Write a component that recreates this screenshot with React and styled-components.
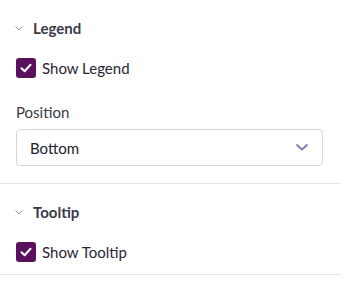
import React from 'react'
import styled, { createGlobalStyle } from 'styled-components'

const Global = createGlobalStyle`
  body {
    margin: 0;
    background: #ffffff;
    font-family: Lato, "Open Sans", sans-serif;
  }
`;

const Panel = styled.div`
  width: 341px;
  background: #fff;
`;

const Section = styled.div`
  padding: 18px 18px ${p => p.$pb}px 16px;
  border-bottom: 1px solid #e7e4f1;
  display: flex;
  flex-direction: column;
`;

const Header = styled.div`
  display: flex;
  align-items: center;
  height: 20px;
  gap: 10px;
  color: #3b3a48;
  font-size: 15px;
  font-weight: 700;
  margin-bottom: 20px;
`;

const Chevron = styled.svg`
  width: 8px;
  height: 5px;
  margin-left: -1px;
`;

const CheckRow = styled.label`
  display: flex;
  align-items: center;
  gap: 6px;
  height: 20px;
  font-size: 15px;
  color: #2a2535;
`;

const Box = styled.span`
  width: 20px;
  height: 20px;
  border-radius: 3px;
  background: #5a0f5f;
  display: flex;
  align-items: center;
  justify-content: center;
`;

const FieldLabel = styled.div`
  margin-top: 24px;
  height: 20px;
  line-height: 20px;
  font-size: 15px;
  color: #3b3a48;
`;

const Select = styled.div`
  margin-top: 7px;
  height: 37px;
  box-sizing: border-box;
  border: 1px solid #d9d7de;
  border-radius: 4px;
  display: flex;
  align-items: center;
  justify-content: space-between;
  padding: 0 14px 0 13px;
  font-size: 15px;
  color: #221d2c;
`;

const Check = ({ label }) => (
  <CheckRow>
    <Box>
      <svg width="12" height="10" viewBox="0 0 12 10">
        <path d="M1.5 5.2 L4.6 8.2 L10.5 1.8" fill="none" stroke="#fff" strokeWidth="2" strokeLinecap="round" strokeLinejoin="round" />
      </svg>
    </Box>
    {label}
  </CheckRow>
);

const SectionHead = ({ title }) => (
  <Header>
    <Chevron viewBox="0 0 8 5">
      <path d="M0.5 0.5 L4 4 L7.5 0.5" fill="none" stroke="#9a98a6" strokeWidth="1" />
    </Chevron>
    {title}
  </Header>
);

export default function App() {
  return (
    <Panel>
      <Global />
      <Section $pb={17}>
        <SectionHead title="Legend" />
        <Check label="Show Legend" />
        <FieldLabel>Position</FieldLabel>
        <Select>
          Bottom
          <svg width="12" height="7" viewBox="0 0 12 7">
            <path d="M1 1 L6 5.5 L11 1" fill="none" stroke="#8576ad" strokeWidth="1.8" strokeLinecap="round" strokeLinejoin="round" />
          </svg>
        </Select>
      </Section>
      <Section $pb={12}>
        <SectionHead title="Tooltip" />
        <Check label="Show Tooltip" />
      </Section>
    </Panel>
  );
}
